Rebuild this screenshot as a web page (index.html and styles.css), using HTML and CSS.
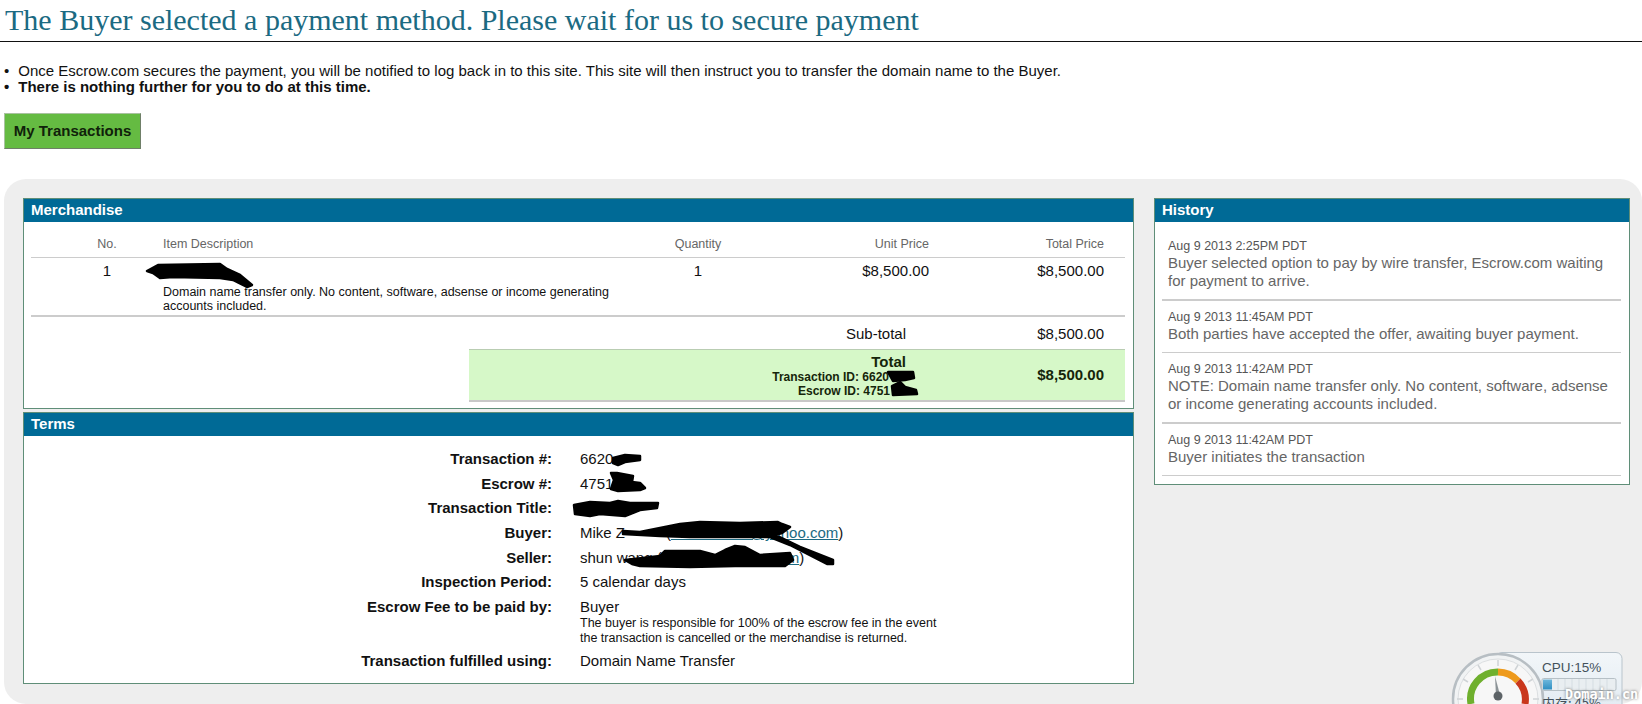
FILE: index.html
```html
<!DOCTYPE html>
<html lang="en">
<head>
<meta charset="utf-8">
<title>Escrow transaction</title>
<link rel="stylesheet" href="styles.css">
</head>
<body>
<h1 class="title">The Buyer selected a payment method. Please wait for us to secure payment</h1>
<ul class="notes">
  <li>Once Escrow.com secures the payment, you will be notified to log back in to this site. This site will then instruct you to transfer the domain name to the Buyer.</li>
  <li class="strong">There is nothing further for you to do at this time.</li>
</ul>
<a class="btn" href="#">My Transactions</a>
<div class="panel">
  <div class="main-col">
    <section class="box">
      <h2 class="box-head">Merchandise</h2>
      <div class="merch">
        <div class="grid head-row">
          <div class="c-no">No.</div><div>Item Description</div><div class="c-qty">Quantity</div><div class="c-r">Unit Price</div><div class="c-r c-last">Total Price</div>
        </div>
        <div class="grid item-row">
          <div class="c-no">1</div>
          <div class="desc">Domain name transfer only. No content, software, adsense or income generating accounts included.</div>
          <div class="c-qty">1</div><div class="c-r">$8,500.00</div><div class="c-r c-last">$8,500.00</div>
        </div>
        <div class="sub-row"><span class="sub-label">Sub-total</span><span class="sub-val">$8,500.00</span></div>
        <div class="total-row">
          <div class="total-label">
            <div class="total-word">Total</div>
            <div>Transaction ID: 6620<span class="gap-a"></span></div>
            <div>Escrow ID: 4751<span class="gap-b"></span></div>
          </div>
          <div class="total-val">$8,500.00</div>
        </div>
      </div>
    </section>
    <section class="box">
      <h2 class="box-head">Terms</h2>
      <div class="terms">
        <div class="term"><div class="t-label">Transaction #:</div><div class="t-val">6620</div></div>
        <div class="term"><div class="t-label">Escrow #:</div><div class="t-val">4751</div></div>
        <div class="term"><div class="t-label">Transaction Title:</div><div class="t-val"></div></div>
        <div class="term"><div class="t-label">Buyer:</div><div class="t-val">Mike Z••••••• (<a href="#">•••••••••••••••@yahoo.com</a>)</div></div>
        <div class="term"><div class="t-label">Seller:</div><div class="t-val">shun wang (<a href="#">••••••••••••••••••••.com</a>)</div></div>
        <div class="term"><div class="t-label">Inspection Period:</div><div class="t-val">5 calendar days</div></div>
        <div class="term"><div class="t-label">Escrow Fee to be paid by:</div><div class="t-val">Buyer<div class="t-note">The buyer is responsible for 100% of the escrow fee in the event<br>the transaction is cancelled or the merchandise is returned.</div></div></div>
        <div class="term"><div class="t-label">Transaction fulfilled using:</div><div class="t-val">Domain Name Transfer</div></div>
      </div>
    </section>
  </div>
  <aside class="side-col">
    <section class="box">
      <h2 class="box-head">History</h2>
      <div class="history">
        <div class="h-item thick"><div class="h-date">Aug 9 2013 2:25PM PDT</div><div class="h-text">Buyer selected option to pay by wire transfer, Escrow.com waiting for payment to arrive.</div></div>
        <div class="h-item"><div class="h-date">Aug 9 2013 11:45AM PDT</div><div class="h-text">Both parties have accepted the offer, awaiting buyer payment.</div></div>
        <div class="h-item thick"><div class="h-date">Aug 9 2013 11:42AM PDT</div><div class="h-text">NOTE: Domain name transfer only. No content, software, adsense or income generating accounts included.</div></div>
        <div class="h-item"><div class="h-date">Aug 9 2013 11:42AM PDT</div><div class="h-text">Buyer initiates the transaction</div></div>
      </div>
    </section>
  </aside>
</div>

<svg class="scribbles" width="1642" height="704" viewBox="0 0 1642 704" aria-hidden="true">
  <g fill="#000" stroke="#000" stroke-width="2.5" stroke-linejoin="round">
    <path d="M147 271 L158 265 L220 264 L227 269 L240 275 L252 285 L247 287 L233 280 L220 278 L173 277 L160 278 L153 273Z"/>
    <path d="M613 458 L625 455 L640 456 L640 460 L625 462 L618 465 L613 463Z"/>
    <path d="M611 473 L617 473 L633 476 L632 482 L640 483 L645 488 L640 490 L618 491 L611 489 L614 480Z"/>
    <path d="M574 505 L590 502 L610 503 L618 501 L630 503 L658 503 L657 508 L640 510 L625 516 L600 514 L590 516 L575 514Z"/>
    <path d="M623 531 L640 532 L680 524 L700 522 L740 523 L778 522 L782 524 L790 527 L782 533 L775 535 L800 547 L833 560 L833 564 L827 564 L790 545 L770 537 L740 537 L690 537 L660 536 L623 534Z"/>
    <path d="M625 560 L660 556 L665 551 L700 551 L715 555 L725 550 L735 546 L745 547 L760 555 L790 553 L793 560 L785 566 L735 566 L690 567 L640 566 L632 564Z"/>
    <path d="M888 372 L913 372 L914 378 L905 380 L893 381Z"/>
    <path d="M892 386 L900 382 L905 387 L916 390 L917 394 L893 395Z"/>
  </g>
</svg>

<div class="widget">
  <svg width="190" height="60" viewBox="0 0 190 60" aria-hidden="true">
    <defs>
      <linearGradient id="wbg" x1="0" y1="0" x2="0" y2="1"><stop offset="0" stop-color="#f2f6f9"/><stop offset="1" stop-color="#dfe9f1"/></linearGradient>
      <linearGradient id="bar" x1="0" y1="0" x2="0" y2="1"><stop offset="0" stop-color="#6fb8dc"/><stop offset="1" stop-color="#2f8fc2"/></linearGradient>
    </defs>
    <rect x="46" y="0.5" width="126" height="70" rx="6" fill="url(#wbg)" stroke="#b9c4cc"/>
    <circle cx="48" cy="47" r="45" fill="#f1f3f4" stroke="#b7bec3" stroke-width="2.5"/>
    <circle cx="48" cy="47" r="40" fill="#f7f7f7" stroke="#dcdfe1"/>
    <g stroke="#cfd3d6" stroke-width="1.5">
      <path d="M48 8V14M28 13L31 18M13 27L18 30M7 47H13M68 13L65 18M83 27L78 30M89 47H83"/>
    </g>
    <path d="M21 52A27 27 0 0 1 48 20" fill="none" stroke="#6fb02e" stroke-width="7"/>
    <path d="M48 20A27 27 0 0 1 68 29" fill="none" stroke="#ee9a1c" stroke-width="7"/>
    <path d="M68 29A27 27 0 0 1 75 52" fill="none" stroke="#c9371c" stroke-width="7"/>
    <path d="M45 24L50 43L46 44Z" fill="#8b9296"/>
    <circle cx="48" cy="44" r="4.5" fill="#5d6367"/>
    <rect x="92" y="26.5" width="74" height="12" rx="1.5" fill="#e9eef1" stroke="#b6c0c6"/>
    <path d="M108 27V38M115 27V38M122 27V38M129 27V38M136 27V38M143 27V38M150 27V38M157 27V38" stroke="#d5dde2"/>
    <rect x="93" y="27.5" width="9" height="10" fill="url(#bar)"/>
  </svg>
  <div class="w-cpu">CPU:15%</div>
  <div class="w-mem">内存: 45%</div>
  <div class="w-mark">Domain.cn</div>
</div>
</body>
</html>
```
FILE: styles.css
```css
* { box-sizing: border-box; }
html, body { margin: 0; padding: 0; }
body {
  width: 1642px;
  height: 704px;
  overflow: hidden;
  position: relative;
  background: #fff;
  font-family: "Liberation Sans", Arial, sans-serif;
  color: #111;
}
.title {
  margin: 0;
  height: 42px;
  padding: 3px 0 0 5px;
  border-bottom: 1px solid #111;
  font: 400 30px/34px "Liberation Serif", serif;
  color: #1b6a82;
}
.notes {
  list-style: none;
  margin: 20px 0 0;
  padding: 0 0 0 4px;
  font-size: 15px;
  line-height: 17px;
}
.notes li { display: flex; gap: 9px; }
.notes li::before { content: "•"; }
.notes .strong { font-weight: 700; margin-top: -1px; }
.btn {
  display: block;
  width: 137px;
  height: 36px;
  margin: 18px 0 0 4px;
  background: #65bb42;
  border: 1px solid #a9c2a0;
  border-right-color: #6f7f68;
  border-bottom-color: #6f7f68;
  color: #10210a;
  font: 700 15px/33px "Liberation Sans", sans-serif;
  text-align: center;
  text-decoration: none;
}
.panel {
  display: flex;
  gap: 20px;
  margin: 30px 0 0 4px;
  width: 1638px;
  height: 525px;
  padding: 19px 12px 0 19px;
  background: #eeeeee;
  border-radius: 22px;
}
.main-col { width: 1111px; display: flex; flex-direction: column; gap: 3px; }
.side-col { width: 476px; }
.box { background: #fff; border: 1px solid #5f8e78; }
.box-head {
  margin: 0;
  height: 23px;
  padding: 0 7px;
  background: #006a96;
  color: #fff;
  font: 700 15px/22px "Liberation Sans", sans-serif;
}
.merch { padding: 0 8px 6px 7px; }
.grid {
  display: grid;
  grid-template-columns: 132px 477px 116px 173px 196px;
}
.c-no { padding-left: 20px; text-align: center; }
.c-qty { text-align: center; }
.c-r { text-align: right; }
.c-last { padding-right: 21px; }
.head-row {
  height: 36px;
  padding-top: 14px;
  border-bottom: 1px solid #ccc;
  font-size: 12.5px;
  line-height: 16px;
  color: #666;
}
.item-row {
  height: 59px;
  padding-top: 5px;
  border-bottom: 2px solid #ccc;
  font-size: 15px;
  line-height: 16px;
}
.desc {
  padding-top: 22px;
  width: 455px;
  font-size: 12.5px;
  line-height: 14px;
}
.sub-row {
  display: flex;
  height: 32px;
  padding-top: 8px;
  font-size: 15px;
  line-height: 17px;
}
.sub-label { width: 875px; text-align: right; }
.sub-val { width: 198px; text-align: right; }
.total-row {
  display: flex;
  margin-left: 438px;
  height: 53px;
  padding-top: 3px;
  background: #d6f8c8;
  border-top: 1px solid #b9cdb2;
  border-bottom: 2px solid #c8c8c8;
  color: #15250a;
}
.total-label {
  width: 437px;
  text-align: right;
  font-size: 12px;
  font-weight: 700;
  line-height: 14px;
}
.total-word { font-size: 15px; line-height: 17px; }
.gap-a, .gap-b { display: inline-block; }
.gap-a { width: 17px; }
.gap-b { width: 16px; }
.total-val {
  width: 198px;
  text-align: right;
  font-size: 15px;
  font-weight: 700;
  line-height: 44px;
}
.terms { padding: 11px 0 9px; }
.term { display: flex; padding: 3.3px 0; line-height: 18px; font-size: 15px; }
.t-label { width: 528px; text-align: right; font-weight: 700; }
.t-val { margin-left: 28px; min-height: 18px; }
.t-val a { color: #1b6a82; }
.t-note { font-size: 12.5px; line-height: 15px; }
.history { padding: 8px 8px 8px 7px; }
.h-item { padding: 9px 5px 9px 6px; border-bottom: 1px solid #ccc; color: #666; }
.h-item.thick { border-bottom-width: 2px; }
.h-date { font-size: 12.5px; line-height: 15px; color: #555; }
.h-text { font-size: 15px; line-height: 18px; }
.scribbles { position: absolute; left: 0; top: 0; pointer-events: none; }
.widget {
  position: absolute;
  left: 1450px;
  top: 652px;
  width: 192px;
  height: 52px;
  overflow: hidden;
}
.widget svg { display: block; }
.w-cpu, .w-mem, .w-mark { position: absolute; white-space: nowrap; }
.w-cpu { left: 92px; top: 7px; font: 13.5px/18px "Liberation Sans", sans-serif; color: #44525c; }
.w-mem { left: 92px; top: 43px; font: 13px/16px "Noto Sans CJK SC", sans-serif; color: #44525c; }
.w-mark {
  left: 115px;
  top: 34px;
  font: 700 13.5px/16px "DejaVu Sans Mono", monospace;
  color: #fff;
  text-shadow: 0 0 3px #666;
}
```
